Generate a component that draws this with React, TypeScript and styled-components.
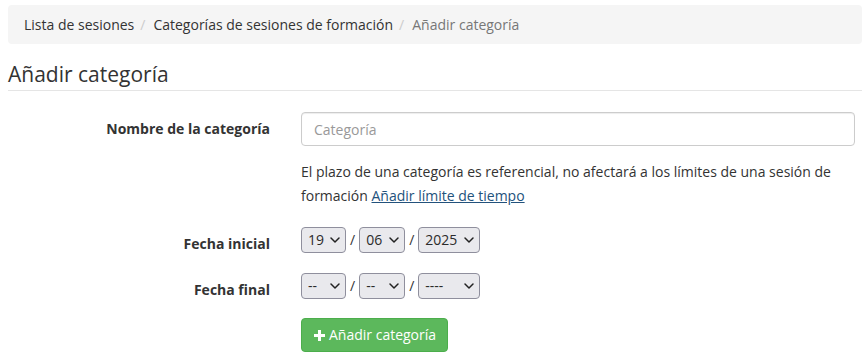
import React from 'react';
import styled, { createGlobalStyle } from 'styled-components';
import { ChevronDown } from 'lucide-react';

const GlobalStyle = createGlobalStyle`
  html, body {
    margin: 0;
    padding: 0;
    background: #fff;
  }
  body {
    font-family: "Open Sans", "Liberation Sans", sans-serif;
    font-size: 14px;
    line-height: 20px;
    color: #333;
  }
  * {
    box-sizing: border-box;
  }
`;

const Page = styled.div`
  padding: 5px 1px 0 8px;
`;

const Breadcrumb = styled.ol`
  display: flex;
  align-items: center;
  margin: 0;
  padding: 9.5px 16px;
  list-style: none;
  background: #f5f5f5;
  border-radius: 4px;

  li + li::before {
    content: '/';
    color: #ccc;
    padding: 0 8px 0 6px;
  }
`;

const Crumb = styled.li<{ $active?: boolean }>`
  color: ${(p) => (p.$active ? '#777' : '#333')};
`;

const Title = styled.h3`
  margin: 19px 0 0;
  padding-bottom: 5px;
  font-size: 21px;
  font-weight: 400;
  line-height: 22px;
  color: #333;
  border-bottom: 1px solid #e5e5e5;
`;

const Form = styled.form`
  padding-top: 21px;
`;

const Group = styled.div<{ $gap?: number }>`
  display: grid;
  grid-template-columns: 262px 554px;
  column-gap: 31px;
  margin-bottom: ${(p) => p.$gap ?? 0}px;
`;

const Label = styled.label`
  padding-top: 7px;
  text-align: right;
  font-weight: 700;
`;

const Control = styled.div`
  min-width: 0;
`;

const TextInput = styled.input`
  display: block;
  width: 100%;
  height: 34px;
  padding: 6px 12px;
  font: inherit;
  color: #555;
  border: 1px solid #ccc;
  border-radius: 4px;
  box-shadow: inset 0 1px 1px rgba(0, 0, 0, 0.075);

  &::placeholder {
    color: #999;
  }
`;

const Help = styled.p`
  margin: 14px 0 0;
  line-height: 24px;
  color: #333;

  a {
    color: #23527c;
    text-decoration: underline;
  }
`;

const DateRow = styled.div`
  display: flex;
  align-items: center;
  gap: 4px;
`;

const SelectBox = styled.div<{ $width: number }>`
  position: relative;
  width: ${(p) => p.$width}px;
  height: 26px;

  svg {
    position: absolute;
    right: 3px;
    top: 5px;
    pointer-events: none;
    color: #222;
  }
`;

const Select = styled.select`
  appearance: none;
  width: 100%;
  height: 100%;
  padding: 0 0 0 6px;
  font: inherit;
  font-size: 14px;
  color: #2b2b2b;
  background: #e9e9ed;
  border: 1px solid #8f8f9d;
  border-radius: 4px;
`;

const Slash = styled.span`
  color: #333;
`;

const SubmitButton = styled.button`
  display: inline-flex;
  align-items: center;
  gap: 4px;
  height: 34px;
  padding: 6px 11px 6px 12px;
  font: inherit;
  color: #fff;
  background: #5cb85c;
  border: 1px solid #4cae4c;
  border-radius: 4px;
  cursor: pointer;
`;

const PlusIcon = () => (
  <svg width="11" height="11" viewBox="0 0 11 11">
    <path d="M4 0h3v4h4v3H7v4H4V7H0V4h4z" fill="#fff" />
  </svg>
);

interface DateSelectProps {
  day: string;
  month: string;
  year: string;
}

const DateSelect = ({ day, month, year }: DateSelectProps) => (
  <DateRow>
    <SelectBox $width={45}>
      <Select defaultValue={day}>
        <option>{day}</option>
      </Select>
      <ChevronDown size={16} strokeWidth={2.25} />
    </SelectBox>
    <Slash>/</Slash>
    <SelectBox $width={46}>
      <Select defaultValue={month}>
        <option>{month}</option>
      </Select>
      <ChevronDown size={16} strokeWidth={2.25} />
    </SelectBox>
    <Slash>/</Slash>
    <SelectBox $width={62}>
      <Select defaultValue={year}>
        <option>{year}</option>
      </Select>
      <ChevronDown size={16} strokeWidth={2.25} />
    </SelectBox>
  </DateRow>
);

const App = () => (
  <Page>
    <GlobalStyle />
    <Breadcrumb>
      <Crumb>Lista de sesiones</Crumb>
      <Crumb>Categorías de sesiones de formación</Crumb>
      <Crumb $active>Añadir categoría</Crumb>
    </Breadcrumb>
    <Title>Añadir categoría</Title>
    <Form onSubmit={(e) => e.preventDefault()}>
      <Group $gap={19}>
        <Label>Nombre de la categoría</Label>
        <Control>
          <TextInput placeholder="Categoría" />
          <Help>
            El plazo de una categoría es referencial, no afectará a los límites de una sesión de
            formación <a href="#">Añadir límite de tiempo</a>
          </Help>
        </Control>
      </Group>
      <Group $gap={19}>
        <Label>Fecha inicial</Label>
        <Control>
          <DateSelect day="19" month="06" year="2025" />
        </Control>
      </Group>
      <Group $gap={18}>
        <Label>Fecha final</Label>
        <Control>
          <DateSelect day="--" month="--" year="----" />
        </Control>
      </Group>
      <Group>
        <div />
        <Control>
          <SubmitButton type="submit">
            <PlusIcon />
            Añadir categoría
          </SubmitButton>
        </Control>
      </Group>
    </Form>
  </Page>
);

export default App;
